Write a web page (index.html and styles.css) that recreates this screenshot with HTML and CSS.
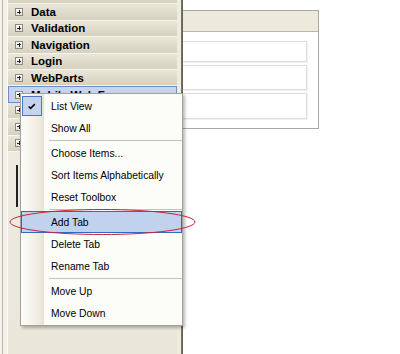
FILE: index.html
```html
<!DOCTYPE html>
<html lang="en">
<head>
  <meta charset="UTF-8">
  <title>Toolbox context menu</title>
  <link rel="stylesheet" href="styles.css">
</head>
<body>

  <!-- Toolbox -->
  <div class="toolbox">
    <div class="strip"></div>
    <div class="groups">
      <div class="group"></div>
      <div class="group"><span class="plus"></span>Data</div>
      <div class="group"><span class="plus"></span>Validation</div>
      <div class="group"><span class="plus"></span>Navigation</div>
      <div class="group"><span class="plus"></span>Login</div>
      <div class="group"><span class="plus"></span>WebParts</div>
      <div class="group selected"><span class="plus"></span>Mobile Web Forms</div>
      <!-- these sit under the menu -->
      <div class="group"><span class="plus"></span></div>
      <div class="group"><span class="plus"></span></div>
      <div class="group"><span class="plus"></span></div>
      <div class="caret"></div>
    </div>
    <div class="edge"></div>
  </div>

  <!-- Designer -->
  <div class="designer">
    <div class="panel">
      <div class="panel-head"></div>
      <div class="panel-body">
        <div class="field f1"></div>
        <div class="field f2"></div>
        <div class="field f3"></div>
      </div>
    </div>
  </div>

  <!-- Context menu -->
  <div class="menu">
    <div class="item checked"><span class="icon"><svg width="19" height="19" viewBox="0 0 19 19"><path d="M6 9.5 L8 11.5 L12.5 7" fill="none" stroke="#000" stroke-width="1.6"/></svg></span>List View</div>
    <div class="item">Show All</div>
    <div class="sep"></div>
    <div class="item">Choose Items...</div>
    <div class="item">Sort Items Alphabetically</div>
    <div class="item">Reset Toolbox</div>
    <div class="sep"></div>
    <div class="item hot">Add Tab</div>
    <div class="item">Delete Tab</div>
    <div class="item">Rename Tab</div>
    <div class="sep"></div>
    <div class="item">Move Up</div>
    <div class="item">Move Down</div>
  </div>

  <!-- red ring round "Add Tab" -->
  <svg class="ring" width="200" height="32" viewBox="0 0 200 32">
    <ellipse cx="102.5" cy="16" rx="92.5" ry="12.5" fill="none" stroke="#c8243c" stroke-width="1"/>
  </svg>

</body>
</html>
```

FILE: styles.css
```css
* { margin: 0; padding: 0; box-sizing: border-box; }
body {
  width: 400px;
  height: 354px;
  overflow: hidden;
  background: #fff;
  display: flex;
  font-family: 'Liberation Sans', Arial, sans-serif;
  position: relative;
}

.toolbox {
  width: 183px;
  height: 354px;
  display: flex;
  background: linear-gradient(to bottom, #f1efe7, #e9e6da);
}
.strip {
  width: 8px;
  border-right: 1px solid #fbfaf6;
  background: linear-gradient(to right, #f4f2ea 2px, #b8b6aa 2px, #b8b6aa 3px, #f2f0e8 3px);
}
.groups {
  flex: 1;
  margin-top: -12px;
  display: flex;
  flex-direction: column;
}
.group {
  height: 16.4px;
  flex: none;
  display: flex;
  align-items: center;
  padding-left: 7px;
  font-size: 11.5px;
  font-weight: bold;
  color: #000;
  background: linear-gradient(to bottom, #e9e6d9, #d6d2c0);
  border-bottom: 1px solid #f4f3ec;
  white-space: nowrap;
  overflow: hidden;
}
.group.selected {
  background: #c6d4ee;
  border: 1px solid #6d8fc9;
  padding-left: 6px;
}
.plus {
  width: 8px;
  height: 8px;
  margin-right: 8px;
  flex: none;
  border: 1px solid #8c8a7e;
  background:
    linear-gradient(#222, #222) center / 4px 1px no-repeat,
    linear-gradient(#222, #222) center / 1px 4px no-repeat,
    linear-gradient(to bottom, #fff, #e4e2d8);
}
.caret {
  width: 2px;
  height: 42px;
  margin: 13px 0 0 8px;
  background: #222;
}
.edge {
  width: 6px;
  background: linear-gradient(to right, #eeebdf 4px, #7b7969 4px, #5f5d50 6px);
}

.designer {
  flex: 1;
  padding-top: 10px;
}
.panel {
  width: 136px;
  border: 1px solid #a9a8a2;
  border-left: none;
}
.panel-head {
  height: 21px;
  background: #ecebdb;
  border-bottom: 1px solid #b9b7aa;
}
.panel-body {
  padding: 9px 11px 9px 0;
  display: flex;
  flex-direction: column;
  gap: 3px;
}
.field {
  border: 1px solid #dedede;
  border-left: none;
  box-shadow: 1px 1px 0 #f1f1f1;
}
.f1 { height: 21px; }
.f2 { height: 25px; }
.f3 { height: 26px; }

.menu {
  position: absolute;
  left: 20px;
  top: 93px;
  width: 163px;
  padding: 1px 0;
  background: linear-gradient(to right, #fefefc 0, #ece9dc 20px, #e4e1d2 23px, #fcfcf9 23px);
  border: 1px solid #a3a198;
  box-shadow: 2px 2px 3px rgba(0, 0, 0, 0.28);
  font-size: 10.3px;
  color: #000;
}
.item {
  height: 22px;
  display: flex;
  align-items: center;
  padding-left: 30px;
  position: relative;
  white-space: nowrap;
}
.item.hot {
  background: #c1d2ee;
  border: 1px solid #316ac5;
  padding-left: 29px;
}
.icon {
  position: absolute;
  left: 1px;
  top: 1px;
  width: 20px;
  height: 20px;
  background: #c4d4ef;
  border: 1px solid #4a78c4;
  display: flex;
  align-items: center;
  justify-content: center;
}
.sep {
  height: 3px;
  margin-left: 28px;
  background: linear-gradient(#c6c3b6, #c6c3b6) center / 100% 1px no-repeat;
}

.ring {
  position: absolute;
  left: 0;
  top: 206px;
}
```
